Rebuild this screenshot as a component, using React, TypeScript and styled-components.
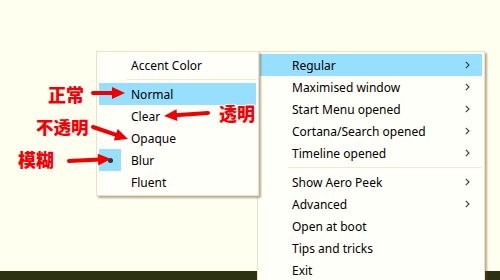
import styled, { createGlobalStyle } from "styled-components";

const GlobalStyle = createGlobalStyle`
    html, body {
        margin: 0;
        padding: 0;
        background: #fffff0;
    }
`;

const Desktop = styled.div`
    position: relative;
    width: 500px;
    height: 280px;
    overflow: hidden;
    background-color: #fffff0;
    font-family: "Noto Sans", "Liberation Sans", sans-serif;
`;

const Taskbar = styled.div`
    position: absolute;
    left: 0;
    right: 0;
    bottom: 0;
    height: 9px;
    background-color: #2c3113;
`;

const MenuRow = styled.div`
    display: flex;
    align-items: flex-start;
    padding: 51px 0 0 96px;
`;

const Menu = styled.div<{ $width: number; $front?: boolean; $overlap?: number }>`
    position: relative;
    z-index: ${p => (p.$front ? 3 : 2)};
    width: ${p => p.$width}px;
    margin-left: ${p => -(p.$overlap ?? 0)}px;
    box-sizing: border-box;
    padding: 2px;
    background-color: #fffffa;
    border: 1px solid #efe0c2;
    box-shadow: 2px 2px 2px rgba(90, 70, 40, 0.45);
    display: flex;
    flex-direction: column;
`;

const Item = styled.div<{ $active?: boolean }>`
    position: relative;
    display: flex;
    align-items: center;
    height: 22px;
    padding-left: 32px;
    padding-right: 12px;
    font-size: 12px;
    color: #000;
    background-color: ${p => (p.$active ? "#97dfff" : "transparent")};
`;

const Label = styled.span`
    flex: 1;
    white-space: nowrap;
`;

const Separator = styled.div`
    height: 1px;
    margin: 3px 0 3px 28px;
    background-color: #f3e8d2;
`;

const CheckBox = styled.div`
    position: absolute;
    left: 0;
    top: 0;
    width: 22px;
    height: 22px;
    background-color: #97dfff;
    display: flex;
    align-items: center;
    justify-content: center;
`;

const Dot = styled.span`
    width: 5px;
    height: 5px;
    border-radius: 50%;
    background-color: #333;
`;

const Note = styled.div<{ $x: number; $y: number; $size?: number }>`
    position: absolute;
    z-index: 5;
    left: ${p => p.$x}px;
    top: ${p => p.$y}px;
    font-family: "Noto Sans CJK SC", sans-serif;
    font-weight: 900;
    font-size: ${p => p.$size ?? 18}px;
    line-height: 1;
    color: #f50000;
    text-shadow: 1px 0 0 #fff, -1px 0 0 #fff, 0 1px 0 #fff, 0 -1px 0 #fff, 0 0 2px #ffc0c0;
    white-space: nowrap;
`;

const Overlay = styled.svg`
    position: absolute;
    z-index: 4;
    left: 0;
    top: 0;
    pointer-events: none;
`;

const Chevron = () => (
    <svg width="5" height="8" viewBox="0 0 5 8">
        <polyline points="0.8,0.8 4,4 0.8,7.2" fill="none" stroke="#3a3a3a" strokeWidth="1.1" />
    </svg>
);

const Arrow = ({ x1, y1, x2, y2 }: { x1: number; y1: number; x2: number; y2: number }) => {
    const dx = x2 - x1;
    const dy = y2 - y1;
    const len = Math.hypot(dx, dy);
    const ux = dx / len;
    const uy = dy / len;
    const head = 13;
    const half = 6;
    const bx = x2 - ux * head;
    const by = y2 - uy * head;
    return (
        <g fill="#f00000" stroke="none">
            <line x1={x1} y1={y1} x2={bx + ux * 2} y2={by + uy * 2} stroke="#f00000" strokeWidth="4" strokeLinecap="round" />
            <polygon points={`${x2},${y2} ${bx - uy * half},${by + ux * half} ${bx + uy * half},${by - ux * half}`} />
        </g>
    );
};

const subItems = ["Normal", "Clear", "Opaque", "Blur", "Fluent"];

const mainItems: [string, boolean][] = [
    ["Regular", true],
    ["Maximised window", true],
    ["Start Menu opened", true],
    ["Cortana/Search opened", true],
    ["Timeline opened", true],
];

const moreItems: [string, boolean][] = [
    ["Show Aero Peek", true],
    ["Advanced", true],
    ["Open at boot", false],
    ["Tips and tricks", false],
    ["Exit", false],
];

export default function App() {
    return (
        <Desktop>
            <GlobalStyle />
            <Taskbar />
            <MenuRow>
                <Menu $width={163} $front>
                    <Item><Label>Accent Color</Label></Item>
                    <Separator />
                    {subItems.map(name => (
                        <Item key={name} $active={name === "Normal"}>
                            {name === "Blur" && <CheckBox><Dot /></CheckBox>}
                            <Label>{name}</Label>
                        </Item>
                    ))}
                </Menu>
                <Menu $width={228} $overlap={2}>
                    {mainItems.map(([name, sub], i) => (
                        <Item key={name} $active={i === 0}>
                            <Label>{name}</Label>
                            {sub && <Chevron />}
                        </Item>
                    ))}
                    <Separator />
                    {moreItems.map(([name, sub]) => (
                        <Item key={name}>
                            <Label>{name}</Label>
                            {sub && <Chevron />}
                        </Item>
                    ))}
                </Menu>
            </MenuRow>
            <Overlay width="500" height="280">
                <Arrow x1={93} y1={93} x2={125} y2={93} />
                <Arrow x1={208} y1={113} x2={164} y2={116} />
                <Arrow x1={93} y1={127} x2={128} y2={139} />
                <Arrow x1={69} y1={161} x2={111} y2={159} />
            </Overlay>
            <Note $x={48} $y={85}>正常</Note>
            <Note $x={219} $y={104}>透明</Note>
            <Note $x={36} $y={118} $size={17.5}>不透明</Note>
            <Note $x={18} $y={150}>模糊</Note>
        </Desktop>
    );
}
